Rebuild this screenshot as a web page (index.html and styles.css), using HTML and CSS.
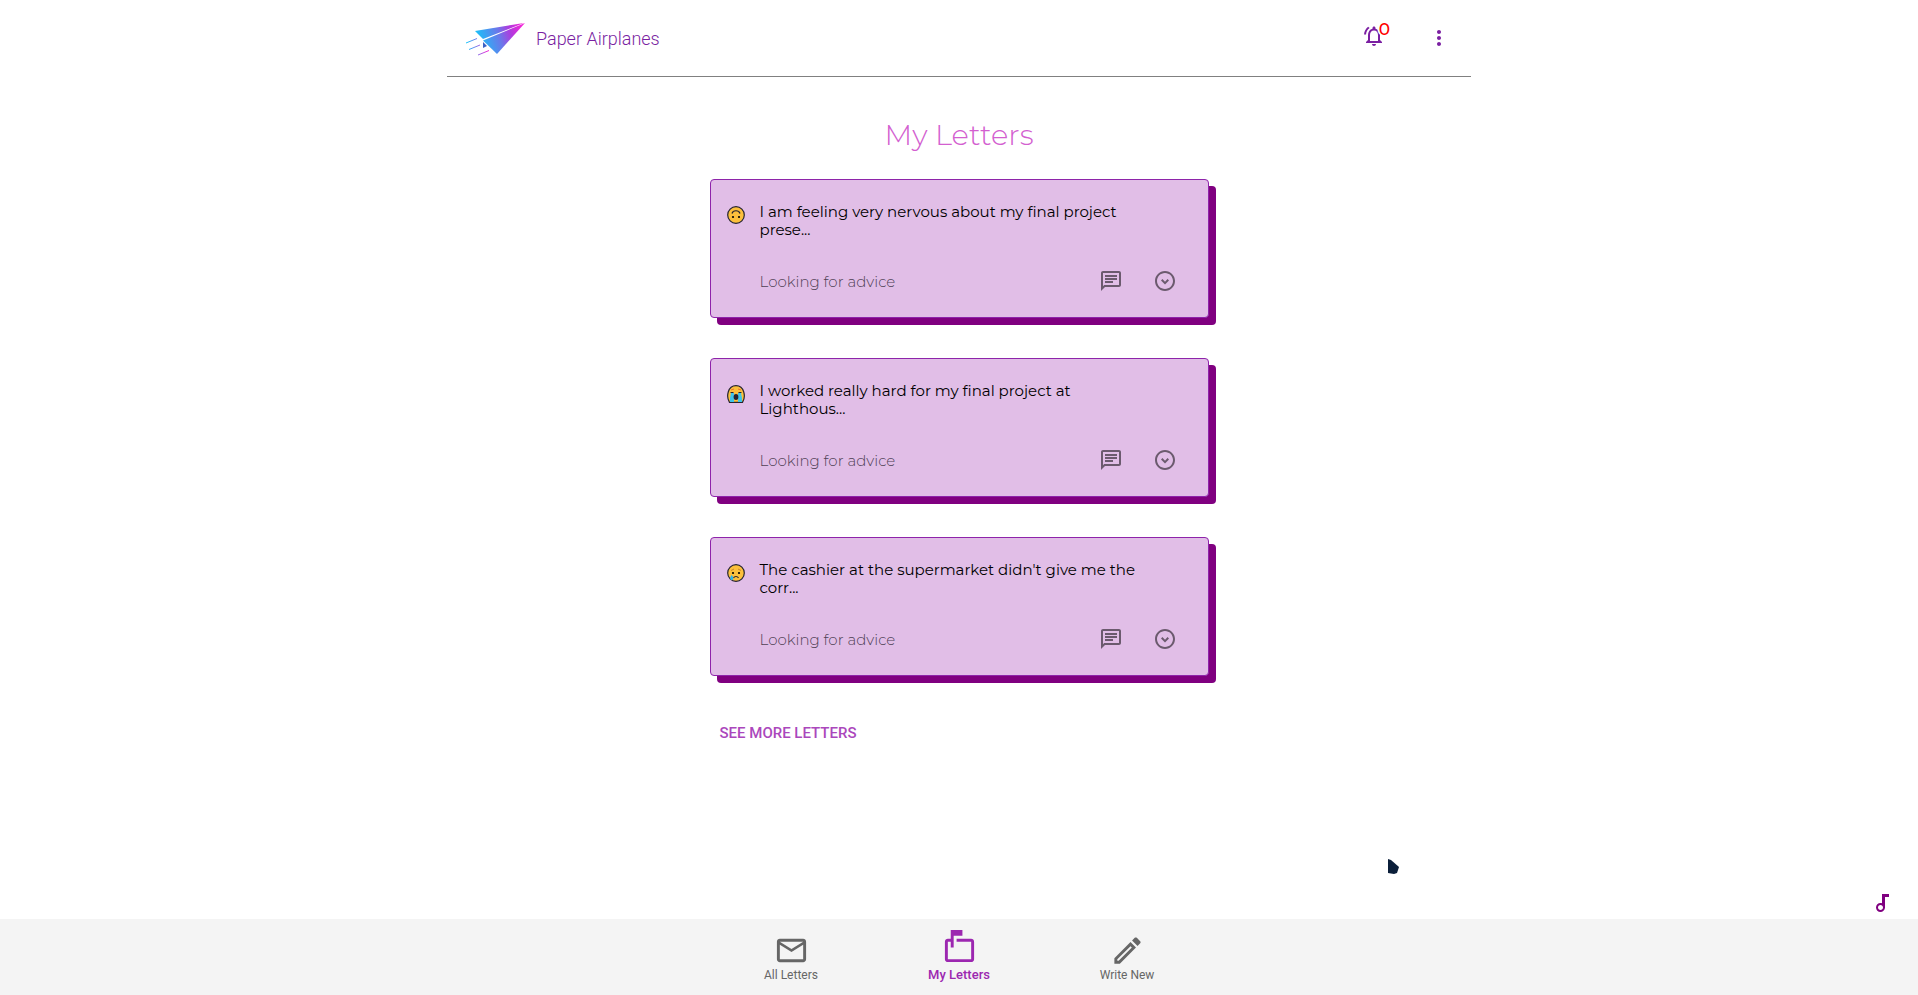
FILE: index.html
```html
<!DOCTYPE html>
<html lang="en">
<head>
<meta charset="utf-8">
<title>Paper Airplanes</title>
<link rel="stylesheet" href="styles.css">
</head>
<body>
<svg class="defs" width="0" height="0" aria-hidden="true">
  <defs>
    <linearGradient id="plane" gradientUnits="userSpaceOnUse" x1="10" y1="20" x2="56" y2="6"><stop offset="0" stop-color="#12c8fa"/><stop offset=".5" stop-color="#6a78ea"/><stop offset=".75" stop-color="#b03ade"/><stop offset="1" stop-color="#f026d8"/></linearGradient>
    <linearGradient id="trail" gradientUnits="userSpaceOnUse" x1="0" y1="20" x2="22" y2="20"><stop offset="0" stop-color="#12c8fa"/><stop offset="1" stop-color="#f026d8"/></linearGradient>
    <symbol id="chat" viewBox="0 0 24 24"><path d="M4 4h16v12H5.17L4 17.17V4m0-2c-1.1 0-1.99.9-1.99 2L2 22l4-4h14c1.1 0 2-.9 2-2V4c0-1.1-.9-2-2-2H4zm2 10h8v2H6v-2zm0-3h12v2H6V9zm0-3h12v2H6V6z"/></symbol>
    <symbol id="expand" viewBox="0 0 24 24"><path d="M12 4c4.41 0 8 3.59 8 8s-3.59 8-8 8-8-3.59-8-8 3.59-8 8-8m0-2C6.48 2 2 6.48 2 12s4.48 10 10 10 10-4.48 10-10S17.52 2 12 2z"/><path d="M12 15.500l-4-4 1.420-1.410L12 12.670l2.580-2.580L16 11.500z"/></symbol>
  </defs>
</svg>
<header class="header">
  <a class="brand" href="#">
    <svg class="brand-logo" viewBox="0 0 60 34" aria-hidden="true">
      <path fill="url(#plane)" d="M9 9L58 1 17 17z"/>
      <path fill="url(#plane)" d="M59 1L31 32 17 18.500z"/>
      <path fill="#3a62c4" d="M17 20l4 4-4 2z"/>
      <path fill="none" stroke="url(#trail)" stroke-width="1" d="M0 21l11-4.500M3 27.500l11-4.500M12 33l11-4.500"/>
    </svg>
    <span class="brand-name">Paper Airplanes</span>
  </a>
  <div class="header-actions">
    <button class="icon-button bell" type="button" aria-label="Notifications">
      <svg class="icon" viewBox="0 0 24 24" aria-hidden="true"><path d="M12 22c1.100 0 2-.9 2-2h-4c0 1.100.9 2 2 2zm6-6v-5c0-3.070-1.630-5.640-4.500-6.320V4c0-.83-.67-1.500-1.500-1.500s-1.500.67-1.500 1.500v.68C7.640 5.360 6 7.920 6 11v5l-2 2v1h16v-1l-2-2zm-2 1H8v-6c0-2.480 1.510-4.500 4-4.500s4 2.020 4 4.500v6zM7.580 4.080L6.150 2.650C3.750 4.480 2.170 7.300 2.030 10.500h2c.15-2.650 1.510-4.970 3.550-6.420z"/></svg>
      <span class="badge">0</span>
    </button>
    <button class="icon-button" type="button" aria-label="Menu">
      <svg class="icon" viewBox="0 0 24 24" aria-hidden="true"><path d="M12 8c1.100 0 2-.9 2-2s-.9-2-2-2-2 .9-2 2 .9 2 2 2zm0 2c-1.100 0-2 .9-2 2s.9 2 2 2 2-.9 2-2-.9-2-2-2zm0 6c-1.100 0-2 .9-2 2s.9 2 2 2 2-.9 2-2-.9-2-2-2z"/></svg>
    </button>
  </div>
</header>
<main class="letters">
  <h1 class="title">My Letters</h1>
  <article class="card">
    <svg class="mood" viewBox="0 0 18 18" role="img" aria-label="Upside-down face"><circle cx="9" cy="9" r="8.300" fill="#fcc03c" stroke="#262430" stroke-width="1.200"/><path d="M5 7.500C6 3.800 12 3.800 13 7.500" fill="none" stroke="#262430" stroke-width="1.200"/><circle cx="6" cy="11" r="1.100"/><circle cx="12" cy="11" r="1.100"/></svg>
    <p class="message">I am feeling very nervous about my final project prese...</p>
    <div class="card-footer">
      <span class="tag">Looking for advice</span>
      <button class="card-button" type="button" aria-label="Responses"><svg class="icon"><use href="#chat"/></svg></button>
      <button class="card-button" type="button" aria-label="Expand"><svg class="icon"><use href="#expand"/></svg></button>
    </div>
  </article>
  <article class="card">
    <svg class="mood" viewBox="0 0 18 18" role="img" aria-label="Crying loudly"><path d="M2.500 17.400C-1 12 .5.700 9 .700S19 12 15.500 17.400z" fill="#fcc03c" stroke="#262430" stroke-width="1.200"/><path d="M4 8h3v9H3v-4zM11 8h3l1 5v4h-4z" fill="#3fc4e8"/><path d="M3.500 7.500h3M11.500 7.500h3" stroke="#262430"/><ellipse cx="9" cy="12" rx="2.400" ry="2.900" fill="#262430"/><path d="M4 5l3-1M14 5l-3-1" stroke="#e8772e"/></svg>
    <p class="message">I worked really hard for my final project at Lighthous...</p>
    <div class="card-footer">
      <span class="tag">Looking for advice</span>
      <button class="card-button" type="button" aria-label="Responses"><svg class="icon"><use href="#chat"/></svg></button>
      <button class="card-button" type="button" aria-label="Expand"><svg class="icon"><use href="#expand"/></svg></button>
    </div>
  </article>
  <article class="card">
    <svg class="mood" viewBox="0 0 18 18" role="img" aria-label="Crying"><circle cx="9" cy="9" r="8.300" fill="#fcc03c" stroke="#262430" stroke-width="1.200"/><circle cx="6" cy="9" r="1.100"/><circle cx="12" cy="9" r="1.100"/><path d="M6.500 14c1-2 4-2 5 0" fill="none" stroke="#262430" stroke-width="1.200"/><path d="M4 6.500l3-1.500M14 6.500L11 5" stroke="#c98a2a"/><path d="M4.700 11c3 4 1 5 0 5s-3-1 0-5z" fill="#2fb4ea"/></svg>
    <p class="message">The cashier at the supermarket didn't give me the corr...</p>
    <div class="card-footer">
      <span class="tag">Looking for advice</span>
      <button class="card-button" type="button" aria-label="Responses"><svg class="icon"><use href="#chat"/></svg></button>
      <button class="card-button" type="button" aria-label="Expand"><svg class="icon"><use href="#expand"/></svg></button>
    </div>
  </article>
  <button class="more" type="button">SEE MORE LETTERS</button>
</main>
<svg class="pointer" viewBox="0 0 12 16" aria-hidden="true"><path fill="#0b1f3a" d="M0 0l3 1 8 7-2 6-3 1-6-1z"/></svg>
<button class="music" type="button" aria-label="Music"><svg class="icon" viewBox="0 0 24 24" aria-hidden="true"><path d="M12 3v9.280c-.47-.17-.97-.28-1.500-.28C8.010 12 6 14.010 6 16.500S8.010 21 10.500 21c2.310 0 4.200-1.750 4.450-4H15V6h4V3h-7zm-1.500 16c-1.380 0-2.500-1.120-2.500-2.500s1.120-2.500 2.500-2.500 2.500 1.120 2.500 2.500-1.120 2.500-2.500 2.500z"/></svg></button>
<nav class="tabs">
  <a class="tab" href="#"><svg class="tab-icon" viewBox="0 0 24 24" aria-hidden="true"><path d="M22 6c0-1.100-.9-2-2-2H4c-1.100 0-2 .9-2 2v12c0 1.100.9 2 2 2h16c1.100 0 2-.9 2-2V6zm-2 0l-8 5-8-5h16zm0 12H4V8l8 5 8-5v10z"/></svg>All Letters</a>
  <a class="tab tab-active" href="#"><svg class="tab-icon" viewBox="0 0 24 24" aria-hidden="true"><path d="M20 6H10v2h10v12H4V8h2v4h2V4h6V0H6v6H4c-1.100 0-2 .9-2 2v12c0 1.100.9 2 2 2h16c1.100 0 2-.9 2-2V8c0-1.100-.9-2-2-2z"/></svg>My Letters</a>
  <a class="tab" href="#"><svg class="tab-icon" viewBox="0 0 24 24" aria-hidden="true"><path d="M14.060 9.020l.92.92L5.920 19H5v-.92l9.060-9.060M17.660 3c-.25 0-.51.1-.7.29l-1.830 1.830 3.750 3.750 1.830-1.830c.39-.39.39-1.020 0-1.410l-2.340-2.340c-.2-.2-.45-.29-.71-.29zm-3.600 3.190L3 17.250V21h3.750L17.810 9.940l-3.750-3.750z"/></svg>Write New</a>
</nav>
</body>
</html>
```
FILE: styles.css
```css
* { box-sizing: border-box; }

body {
  margin: 0;
  min-height: 100vh;
  display: flex;
  flex-direction: column;
  background: #fff;
  font-family: Roboto, sans-serif;
}

button {
  border: 0;
  padding: 0;
  background: none;
  font-family: inherit;
  cursor: pointer;
}

a { text-decoration: none; }

.defs { position: absolute; }

.icon {
  display: block;
  width: 24px;
  height: 24px;
  fill: currentColor;
}

.header {
  width: 100%;
  max-width: 1024px;
  margin: 0 auto;
  padding: 18px 12px 18px 19px;
  display: flex;
  justify-content: space-between;
  align-items: center;
  border-bottom: 1px solid #808080;
}

.brand {
  padding-top: 2px;
  display: flex;
  align-items: center;
  gap: 10px;
  color: #7b1fa2;
}

.brand-logo {
  width: 60px;
  height: 34px;
}

.brand-name {
  font-weight: 300;
  font-size: 18px;
  line-height: 24px;
}

.header-actions {
  display: flex;
  gap: 25px;
}

.icon-button {
  position: relative;
  padding: 8px;
  color: #7b1fa2;
}

.bell { padding: 6px 8px 10px; }

.badge {
  position: absolute;
  top: 1px;
  right: 4px;
  color: #f00;
  font-family: Montserrat, sans-serif;
  font-weight: 500;
  font-size: 17px;
  line-height: 20px;
  text-shadow: 1px 1px 0 #fff, -1px 1px 0 #fff, 0 2px 0 #fff, -2px 0 0 #fff;
}

.letters {
  flex: 1;
  width: 100%;
  max-width: 499px;
  margin: 0 auto;
  padding-top: 38px;
  display: flex;
  flex-direction: column;
  align-items: stretch;
  gap: 40px;
  font-family: Montserrat, Inter, sans-serif;
}

.title {
  margin: 0 0 -16px;
  text-align: center;
  color: #d35fd0;
  font-weight: 300;
  font-size: 29px;
  line-height: 40px;
}

.card {
  padding: 23px 23px 14px 16px;
  display: grid;
  grid-template-columns: 18px 1fr;
  column-gap: 15px;
  row-gap: 20px;
  border: 1px solid #8e24aa;
  border-radius: 4px;
  background: #e1bee7;
  box-shadow: 7px 7px 0 #800080;
}

.mood {
  width: 18px;
  height: 18px;
  margin-top: 3px;
}

.message {
  margin: 0;
  max-width: 376px;
  color: #000;
  font-weight: 400;
  font-size: 15px;
  line-height: 18px;
}

.card-footer {
  grid-column: 2;
  display: flex;
  align-items: center;
  gap: 14px;
}

.tag {
  flex: 1;
  color: #4f4154;
  font-weight: 300;
  font-size: 15px;
}

.card-button {
  padding: 10px 8px;
  color: #6b5a6e;
}

.more {
  align-self: flex-start;
  padding: 7px 10px;
  color: #ab47bc;
  font-family: Roboto, sans-serif;
  font-weight: 500;
  font-size: 15px;
  line-height: 20px;
}

.pointer {
  position: fixed;
  left: 1388px;
  top: 859px;
  width: 12px;
  height: 16px;
}

.music {
  position: fixed;
  right: 24px;
  bottom: 80px;
  color: #800080;
}

.tabs {
  padding: 11px 0 12px;
  display: flex;
  justify-content: center;
  background: #f4f4f4;
}

.tab {
  flex: 0 1 168px;
  display: flex;
  flex-direction: column;
  align-items: center;
  padding-top: 3px;
  color: #666;
  font-size: 12px;
  line-height: 15px;
}

.tab-icon {
  width: 35px;
  height: 35px;
  fill: currentColor;
}

.tab-active {
  padding-top: 0;
  gap: 2px;
  color: #9c27b0;
  font-weight: 500;
  font-size: 13px;
}
```
